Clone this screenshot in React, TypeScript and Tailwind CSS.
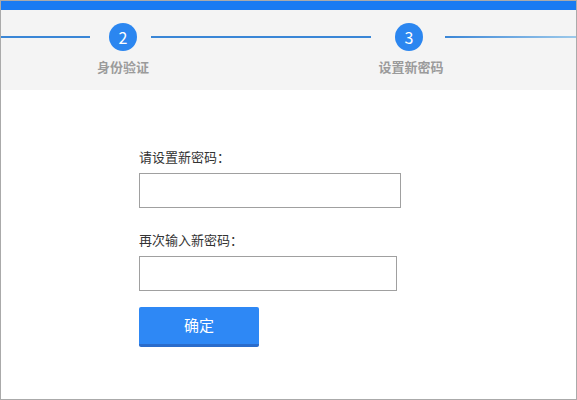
const ResetPassword = () => {
  return (
    <div
      className="w-[577px] h-[400px] border border-[#aaaaaa] bg-white overflow-hidden"
      style={{ fontFamily: '"Microsoft YaHei", "Noto Sans CJK SC", "Noto Sans", sans-serif' }}
    >
      {/* top bar */}
      <div className="h-[9px] bg-[#1a7bf2]" />

      {/* steps */}
      <div className="h-[80px] bg-[#f4f4f4]">
        <div className="flex items-center pt-[13px]">
          <div className="w-[89px] h-[2px] bg-[#3a86d6]" />
          <div className="ml-[19px] w-[28px] h-[28px] rounded-full bg-[#2b86f0] text-white text-[16px] leading-[28px] text-center">
            2
          </div>
          <div className="ml-[14px] w-[220px] h-[2px] bg-[#3a86d6]" />
          <div className="ml-[24px] w-[28px] h-[28px] rounded-full bg-[#2b86f0] text-white text-[16px] leading-[28px] text-center">
            3
          </div>
          <div className="ml-[22px] flex-1 h-[2px] bg-gradient-to-r from-[#3a86d6] to-[#9cc9ea]" />
        </div>
        <div className="flex mt-[8px] text-[13px] leading-[16px] font-bold text-[#9b9b9b]">
          <div className="ml-[82px] w-[80px] text-center">身份验证</div>
          <div className="ml-[208px] w-[80px] text-center">设置新密码</div>
        </div>
      </div>

      {/* form */}
      <div className="pl-[138px] pt-[59px] flex flex-col items-start">
        <label className="text-[13px] leading-[16px] text-[#333333]">请设置新密码：</label>
        <input
          type="password"
          className="mt-[8px] w-[262px] h-[35px] border border-[#a0a0a0] outline-none px-2"
        />
        <label className="mt-[24px] text-[13px] leading-[16px] text-[#333333]">再次输入新密码：</label>
        <input
          type="password"
          className="mt-[8px] w-[258px] h-[35px] border border-[#a0a0a0] outline-none px-2"
        />
        <button className="mt-[16px] w-[120px] h-[40px] rounded-[2px] bg-[#2e88f5] border-b-[3px] border-[#2a6ccb] text-white text-[15px]">
          确定
        </button>
      </div>
    </div>
  );
};

export default function App() {
  return <ResetPassword />;
}
